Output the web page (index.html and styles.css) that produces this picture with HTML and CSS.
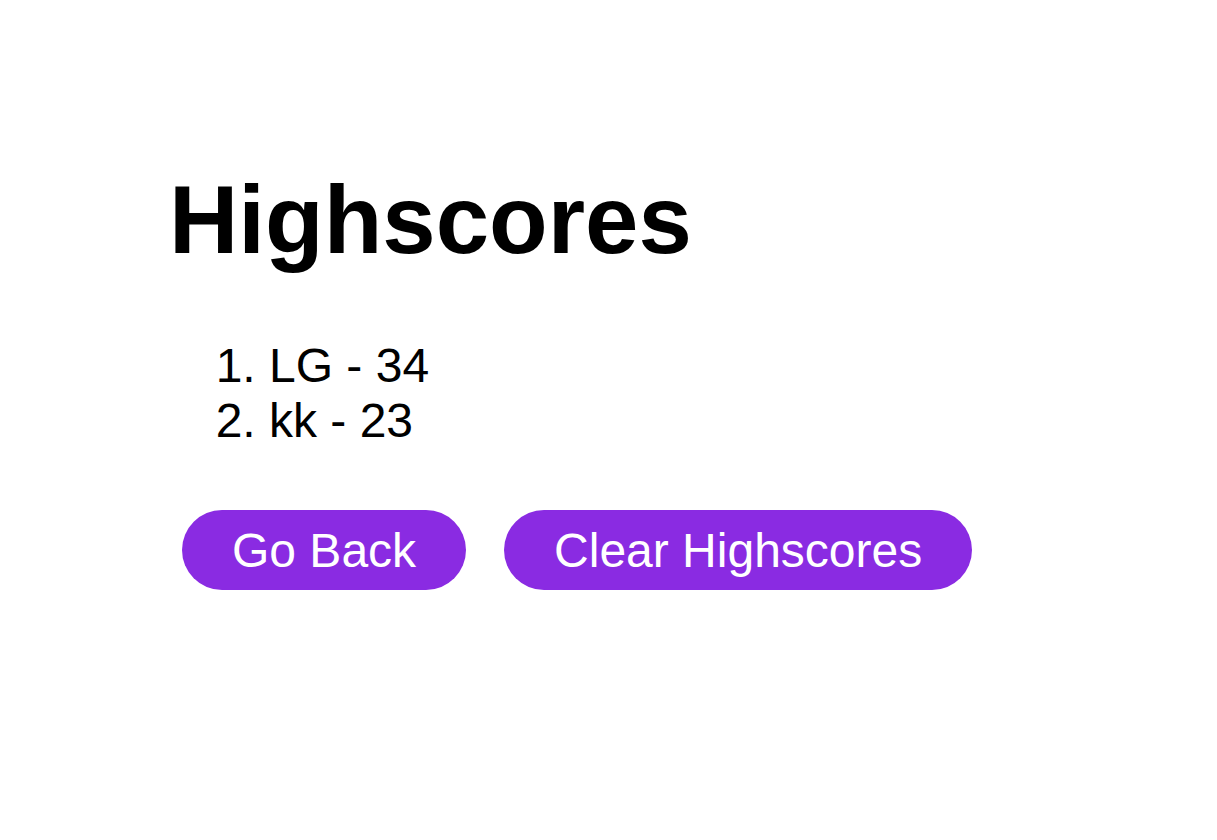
FILE: index.html
```html
<!DOCTYPE html>
<html lang="en">
<head>
<meta charset="utf-8">
<title>Highscores</title>
<link rel="stylesheet" href="styles.css">
</head>
<body>
<main class="page">
  <h1 class="title">Highscores</h1>
  <ol class="scores">
    <li>LG - 34</li>
    <li>kk - 23</li>
  </ol>
  <div class="actions">
    <button class="btn">Go Back</button>
    <button class="btn">Clear Highscores</button>
  </div>
</main>
</body>
</html>
```
FILE: styles.css
```css
html, body {
  margin: 0;
  padding: 0;
  background: #ffffff;
}
body {
  font-family: "Liberation Sans", Arial, sans-serif;
  color: #000000;
}
.page {
  padding: 165px 0 0 169px;
}
.title {
  margin: 0;
  font-size: 96px;
  font-weight: bold;
  line-height: normal;
}
.scores {
  margin: 63px 0 0 0;
  padding-left: 100px;
  font-size: 48px;
  line-height: normal;
}
.actions {
  display: flex;
  gap: 38px;
  margin: 62px 0 0 13px;
}
.btn {
  font-family: "Liberation Sans", Arial, sans-serif;
  font-size: 48px;
  line-height: normal;
  color: #ffffff;
  background: #8a2be2;
  border: none;
  border-radius: 40px;
  padding: 12px 50px;
  height: 80px;
  cursor: pointer;
}
```
